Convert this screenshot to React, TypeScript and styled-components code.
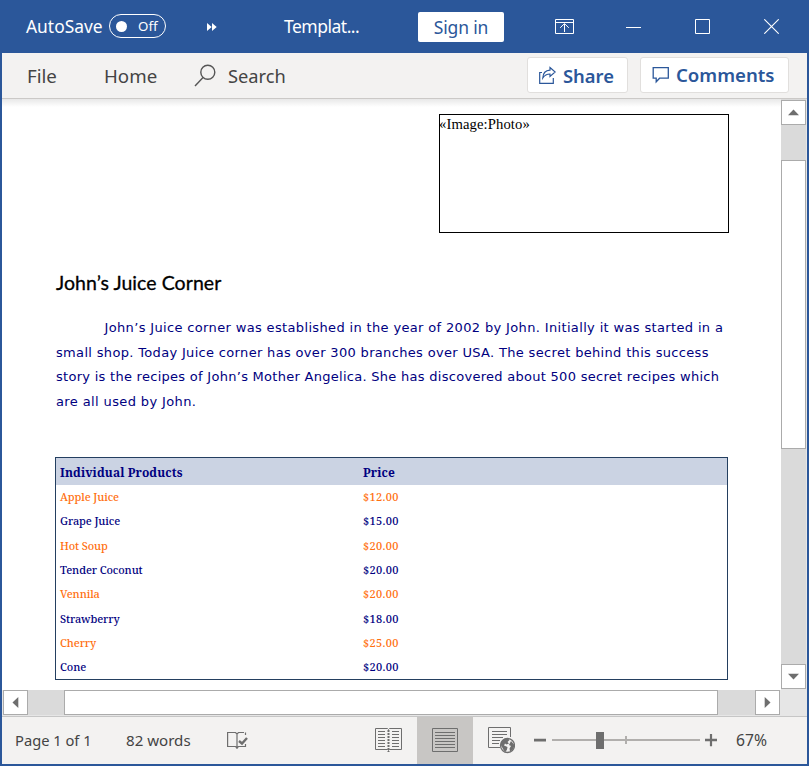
import React from 'react';
import styled, { createGlobalStyle } from 'styled-components';

const BLUE = '#2b579a';
const GREY = '#6e6e6e';

const Global = createGlobalStyle`
  *, *::before, *::after { box-sizing: border-box; }
  body { margin: 0; background: #fff; font-family: 'Noto Sans', 'Open Sans', sans-serif; }
  svg { display: block; flex: none; }
`;

const Window = styled.div`
  width: 809px;
  height: 766px;
  display: flex;
  flex-direction: column;
  background: ${BLUE};
  padding: 0 2px 2px;
  overflow: hidden;
`;

const Label = styled.span<{ $size: number; $track?: number; $w?: number; $weight?: number }>`
  display: block;
  flex: none;
  width: ${p => (p.$w ? `${p.$w}px` : 'auto')};
  font-size: ${p => p.$size}px;
  font-weight: ${p => p.$weight ?? 400};
  letter-spacing: ${p => p.$track ?? 0}px;
  line-height: 1.3;
  white-space: nowrap;
`;

const TitleBar = styled.header`
  flex: none;
  height: 53px;
  display: flex;
  align-items: center;
  padding-left: 24px;
  color: #fff;
`;

const Toggle = styled.div`
  width: 57px;
  height: 24px;
  border: 1px solid #fff;
  border-radius: 12px;
  display: flex;
  align-items: center;
  gap: 12px;
  padding-left: 6px;
  margin: 0 41px 1px 0;
`;

const ToggleText = styled(Label)`
  padding-top: 2px;
  margin-left: -1px;
`;

const Knob = styled.span`
  width: 11px;
  height: 11px;
  border-radius: 50%;
  background: #fff;
`;

const DocName = styled.div`
  width: 134px;
  margin-left: 67px;
`;

const SignIn = styled.button`
  width: 86px;
  height: 30px;
  padding: 0;
  border: 0;
  border-radius: 2px;
  display: flex;
  align-items: center;
  justify-content: center;
  background: #fff;
  color: ${BLUE};
  font-family: inherit;
  margin-bottom: -1px;
`;

const WindowControls = styled.div`
  display: flex;
  align-items: center;
  gap: 54px;
  margin-left: 51px;

  svg:first-child {
    margin-right: -2px;
  }
`;

const Ribbon = styled.nav`
  flex: none;
  height: 46px;
  display: flex;
  align-items: center;
  padding-left: 25px;
  background: #f3f2f1;
  border-bottom: 1px solid #cbc9c7;
  color: #444;

  ${Label} {
    padding-top: 1px;
  }
`;

const SearchBox = styled.div`
  display: flex;
  align-items: center;
  gap: 12px;
  width: 333px;
`;

const RibbonButton = styled.button<{ $w: number; $gap: number }>`
  width: ${p => p.$w}px;
  height: 36px;
  margin: -1px 12px 0 0;
  padding: 0 0 0 11px;
  display: flex;
  align-items: center;
  gap: ${p => p.$gap}px;
  background: #fff;
  border: 1px solid #e1dfdd;
  border-radius: 3px;
  color: ${BLUE};
  font-family: inherit;
`;

const Workspace = styled.main`
  flex: none;
  height: 617px;
  display: grid;
  grid-template-columns: 779px 26px;
  grid-template-rows: 591px 26px;
  background: #e6e6e6;
`;

const Page = styled.article`
  background: linear-gradient(#e8e8e8, #fff 8px);
  padding: 15px 52px 0 53px;
  display: flex;
  flex-direction: column;
`;

const PhotoBox = styled.div`
  align-self: flex-end;
  width: 290px;
  height: 119px;
  border: 1px solid #000;
  font: 14.67px/19px 'Liberation Serif', serif;
  letter-spacing: 0.1px;
  text-indent: -1px;
  color: #000;
`;

const Heading = styled.h1`
  margin: 38px 0 0 1px;
  font: 400 19.5px/24px Lato, sans-serif;
  letter-spacing: 0.06px;
  -webkit-text-stroke: 0.3px #000;
  color: #000;
  white-space: nowrap;
`;

const Paragraph = styled.p`
  margin: 21px 0 0 1px;
  font: 13px/24.5px 'DejaVu Sans', sans-serif;
  color: #000080;
`;

const Line = styled.span<{ $track: number; $indent?: boolean }>`
  display: block;
  white-space: nowrap;
  letter-spacing: ${p => p.$track}px;
  padding-left: ${p => (p.$indent ? 48.5 : 0)}px;
`;

const Products = styled.section`
  width: 673px;
  height: 223px;
  margin-top: 43px;
  border: 1px solid #243f60;
  font-family: 'Noto Serif', 'DejaVu Serif Condensed', serif;
`;

const ProductHead = styled.div`
  display: grid;
  grid-template-columns: 303px 1fr;
  height: 27px;
  padding: 2px 0 0 4px;
  background: #cbd3e3;
  color: #000080;
  font-size: 12px;
  font-weight: 700;
  line-height: 25px;
  letter-spacing: 0.1px;
`;

const ProductRow = styled.div<{ $accent: boolean }>`
  display: grid;
  grid-template-columns: 303px 1fr;
  height: 24.33px;
  padding-left: 4px;
  font-size: 11px;
  font-weight: 500;
  line-height: 24px;
  letter-spacing: -0.12px;
  color: ${p => (p.$accent ? '#ff6f0f' : '#000080')};
`;

const Price = styled.span`
  letter-spacing: 0.35px;
`;

const VScroll = styled.div`
  height: 590px;
  display: flex;
  flex-direction: column;
  width: 25px;
  background: #dadada;
  padding-top: 1px;
`;

const HScroll = styled.div`
  width: 777px;
  height: 26px;
  margin-left: 1px;
  display: flex;
  background: linear-gradient(#dadada 25px, #e6e6e6 25px);
`;

const ScrollPart = styled.div<{ $w?: number; $h?: number }>`
  flex: none;
  width: ${p => p.$w ?? 25}px;
  height: ${p => p.$h ?? 25}px;
  border: 1px solid #ababab;
  background: #fff;
  display: flex;
  align-items: center;
  justify-content: center;
`;

const TrackGap = styled.div<{ $size: number }>`
  flex: 0 0 ${p => p.$size}px;
`;

const StatusBar = styled.footer`
  flex: none;
  height: 48px;
  display: flex;
  align-items: center;
  background: #f3f2f1;
  border-top: 1px solid #c6c6c6;
  padding-left: 13px;
  color: #444;
`;

const ViewButton = styled.div<{ $active?: boolean; $top: number }>`
  width: 56px;
  height: 47px;
  padding-top: ${p => p.$top}px;
  display: flex;
  align-items: flex-start;
  justify-content: center;
  background: ${p => (p.$active ? '#c8c6c4' : 'transparent')};
`;

const ProofSlot = styled.div`
  width: 134px;
`;

const ZoomGroup = styled.div`
  display: flex;
  align-items: center;
  gap: 18px;
  margin-left: 3px;
`;

const Arrow = ({ turn }: { turn: number }) => (
  <svg width="13" height="13" viewBox="0 0 13 13">
    <path d="M1 9.3L6.5 3.5L12 9.3Z" fill={GREY} transform={`rotate(${turn} 6.5 6.5)`} />
  </svg>
);

const products: [string, string][] = [
  ['Apple Juice', '$12.00'],
  ['Grape Juice', '$15.00'],
  ['Hot Soup', '$20.00'],
  ['Tender Coconut', '$20.00'],
  ['Vennila', '$20.00'],
  ['Strawberry', '$18.00'],
  ['Cherry', '$25.00'],
  ['Cone', '$20.00'],
];

export default function App() {
  return (
    <Window>
      <Global />
      <TitleBar>
        <Label $size={17.4} $w={83}>AutoSave</Label>
        <Toggle>
          <Knob />
          <ToggleText $size={13.3}>Off</ToggleText>
        </Toggle>
        <svg width="10" height="8" viewBox="0 0 10 8" fill="#fff">
          <path d="M0 0L4.7 4L0 8ZM5 0L9.7 4L5 8Z" />
        </svg>
        <DocName><Label $size={17.5} $track={-0.5}>Templat...</Label></DocName>
        <SignIn><Label $size={17.5} $track={-0.15}>Sign in</Label></SignIn>
        <WindowControls>
          <svg width="19" height="15" viewBox="0 0 19 15" fill="none" stroke="#fff">
            <path d="M.5 .5H18.5V14.5H.5ZM.5 3.5H18.5M9.5 13V5M5.2 8.8L9.5 4.6L13.8 8.8" />
          </svg>
          <svg width="15" height="15" viewBox="0 0 15 15" stroke="#fff"><path d="M0 8.5H15" /></svg>
          <svg width="15" height="15" viewBox="0 0 15 15" fill="none" stroke="#fff"><path d="M.5 .5H14.5V14.5H.5Z" /></svg>
          <svg width="15" height="15" viewBox="0 0 15 15" stroke="#fff" strokeWidth="1.1"><path d="M.3 .3L14.7 14.7M14.7 .3L.3 14.7" /></svg>
        </WindowControls>
      </TitleBar>

      <Ribbon>
        <Label $size={18.7} $w={77}>File</Label>
        <Label $size={18.7} $w={90}>Home</Label>
        <SearchBox>
          <svg width="22" height="23" viewBox="0 0 22 23" fill="none" stroke="#555" strokeWidth="1.4">
            <circle cx="13.8" cy="8.2" r="7" />
            <path d="M9 13.5L1 22" />
          </svg>
          <Label $size={18.3}>Search</Label>
        </SearchBox>
        <RibbonButton $w={101} $gap={7}>
          <svg width="17" height="18" viewBox="0 0 17 18" fill="none" stroke={BLUE} strokeWidth="1.2">
            <path d="M3 6.5H.7V17.3H14.3V12" />
            <path d="M11 1.5L16.2 6L11 10.5V8C7.6 8 5.5 9.3 3.8 12C4 7.5 6.6 4.5 11 4.2Z" />
          </svg>
          <Label $size={18.4} $weight={600}>Share</Label>
        </RibbonButton>
        <RibbonButton $w={149} $gap={7}>
          <svg width="17" height="18" viewBox="0 0 17 18" fill="none" stroke={BLUE} strokeWidth="1.3">
            <path d="M1.2 1.7H16.3V12.2H7.6L4.2 15.8V12.2H1.2Z" />
          </svg>
          <Label $size={18.6} $weight={600}>Comments</Label>
        </RibbonButton>
      </Ribbon>

      <Workspace>
        <Page>
          <PhotoBox>«Image:Photo»</PhotoBox>
          <Heading>John’s Juice Corner</Heading>
          <Paragraph>
            <Line $track={0.35} $indent>John’s Juice corner was established in the year of 2002 by John. Initially it was started in a</Line>
            <Line $track={0.33}>small shop. Today Juice corner has over 300 branches over USA. The secret behind this success</Line>
            <Line $track={0.28}>story is the recipes of John’s Mother Angelica. She has discovered about 500 secret recipes which</Line>
            <Line $track={0.38}>are all used by John.</Line>
          </Paragraph>
          <Products>
            <ProductHead><span>Individual Products</span><span>Price</span></ProductHead>
            {products.map(([name, price], i) => (
              <ProductRow key={name} $accent={i % 2 === 0}>
                <span>{name}</span>
                <Price>{price}</Price>
              </ProductRow>
            ))}
          </Products>
        </Page>
        <VScroll>
          <ScrollPart><Arrow turn={0} /></ScrollPart>
          <TrackGap $size={35} />
          <ScrollPart $h={289} />
          <TrackGap $size={215} />
          <ScrollPart><Arrow turn={180} /></ScrollPart>
        </VScroll>
        <HScroll>
          <ScrollPart><Arrow turn={-90} /></ScrollPart>
          <TrackGap $size={36} />
          <ScrollPart $w={654} />
          <TrackGap $size={37} />
          <ScrollPart><Arrow turn={90} /></ScrollPart>
        </HScroll>
      </Workspace>

      <StatusBar>
        <Label $size={14.7} $w={111}>Page 1 of 1</Label>
        <Label $size={15.1} $w={101}>82 words</Label>
        <ProofSlot>
          <svg width="21" height="19" viewBox="0 0 21 19" fill="none" stroke={GREY} strokeWidth="1.2">
            <path d="M17 1.5H11.5L10 3L8.5 1.5H.6V15.5H8.5L10 17L11.5 15.5H18.5V13M10 3V18M18.5 1.5V4" />
            <path d="M12 10L15 12.5L20 7" strokeWidth="2.4" />
          </svg>
        </ProofSlot>
        <ViewButton $top={10}>
          <svg width="28" height="26" viewBox="0 0 28 26" fill="none" stroke={GREY}>
            <path d="M12.5 1.5H.5V22.5H12.5L13.5 23.5L14.5 22.5H26.5V1.5H14.5L13.5 2.5L12.5 1.5" />
            <path d="M13.5 3V25" strokeWidth="2" strokeDasharray="2 1" />
            <path d="M3 4.5H10M3 7.5H10M3 10.5H10M3 13.5H10M3 16.5H10M3 19.5H10M17 4.5H24M17 7.5H24M17 10.5H24M17 13.5H24M17 16.5H24M17 19.5H24" />
          </svg>
        </ViewButton>
        <ViewButton $active $top={11}>
          <svg width="26" height="24" viewBox="0 0 26 24" fill="none" stroke={GREY}>
            <path d="M.5 .5H25.5V23.5H.5ZM3 4.5H23M3 7.5H23M3 10.5H23M3 13.5H23M3 16.5H23M3 19.5H23" />
          </svg>
        </ViewButton>
        <ViewButton $top={9}>
          <svg width="28" height="28" viewBox="0 0 28 28" fill="none" stroke={GREY}>
            <path d="M13 21.5H1.5V1.5H23.5V11M5 5.5H20M5 8.5H20M5 11.5H16M5 14.5H13M5 17.5H12" />
            <circle cx="20.5" cy="19.5" r="7" strokeWidth="1.3" fill="#f3f2f1" />
            <path d="M13.5 18C14 14.5 17 12.5 21 12.5L22.5 14L20.5 16L22 17.5L19.5 18.5L18 17.5L17 19.5L20.5 21L20 23.5L18.5 26C16 24.5 16 22 14.5 20.5ZM24 15L27 18.5V21L25.5 24L23 25.5L22.5 22.5L24 20L22 19L23 17Z" fill={GREY} stroke="none" />
          </svg>
        </ViewButton>
        <ZoomGroup>
          <svg width="186" height="18" viewBox="0 0 186 18" fill={GREY}>
            <path d="M2 6.7H14V9.4H2ZM173 6.8H185V9.2H173ZM177.9 2H180.1V14.2H177.9Z" />
            <path d="M20 7H168V9H20ZM93 4H95V12H93Z" fill="#b1afad" />
            <path d="M64 0H72V17H64Z" />
          </svg>
          <Label $size={15.7}>67%</Label>
        </ZoomGroup>
      </StatusBar>
    </Window>
  );
}
